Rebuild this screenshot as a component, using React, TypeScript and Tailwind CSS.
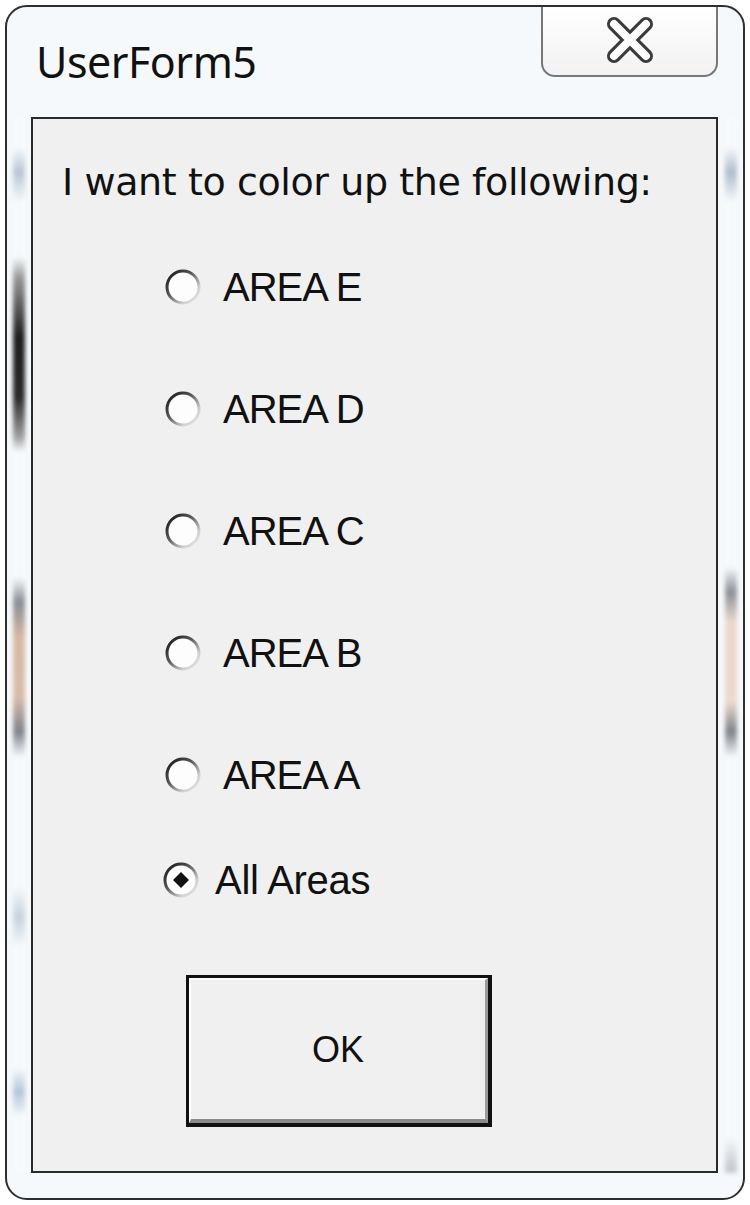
import React from "react";

const areas = ["AREA E", "AREA D", "AREA C", "AREA B", "AREA A"];

const Radio = ({ checked = false }: { checked?: boolean }) => (
  <svg width="40" height="40" viewBox="0 0 40 40" className="shrink-0">
    <defs>
      <linearGradient id="ring" x1="0" y1="0" x2="1" y2="1">
        <stop offset="0" stopColor="#111" />
        <stop offset="0.4" stopColor="#555" />
        <stop offset="0.75" stopColor="#cfcfcf" />
        <stop offset="1" stopColor="#ececec" />
      </linearGradient>
    </defs>
    <circle cx="20" cy="20" r="16" fill="#fdfdfd" stroke="url(#ring)" strokeWidth="3" />
    {checked && <path d="M20 12 L28 20 L20 28 L12 20 Z" fill="#111" />}
  </svg>
);

const CloseGlyph = () => (
  <svg width="60" height="50" viewBox="0 0 60 50">
    <g strokeLinecap="round">
      <path d="M14 9 L46 41 M46 9 L14 41" stroke="#3a3a3a" strokeWidth="14" />
      <path d="M14 9 L46 41 M46 9 L14 41" stroke="#ffffff" strokeWidth="8" />
    </g>
  </svg>
);

export default function App() {
  return (
    <div className="w-[750px] h-[1205px] bg-white p-[5px]">
      <div className="h-full flex flex-col rounded-[22px] border-2 border-[#2e2e2e] bg-[#f6f9fb] overflow-hidden">
        {/* title bar */}
        <div className="h-[110px] flex items-start shrink-0">
          <div
            className="pl-[29px] pt-[32px] text-[43px] leading-[46px] text-[#111] tracking-[-0.5px]"
            style={{ fontFamily: '"Noto Sans", "Open Sans", sans-serif' }}
          >
            UserForm5
          </div>
          <div className="ml-auto mr-[25px] w-[177px] h-[72px] -mt-[2px] rounded-b-[14px] border-2 border-t-0 border-[#777] bg-[linear-gradient(#ffffff,#f2f2f2)] flex items-center justify-center">
            <CloseGlyph />
          </div>
        </div>

        {/* client row */}
        <div className="flex-1 flex">
          <div className="w-[24px] flex justify-center">
            <div className="w-[12px] h-full blur-[2px] bg-[linear-gradient(to_bottom,#f6f9fb_0px,#f6f9fb_30px,#b8c6d4_55px,#f6f9fb_85px,#f6f9fb_140px,#9a9a9a_160px,#1e1e1e_220px,#2a2a2a_280px,#a0a0a0_320px,#f6f9fb_335px,#f6f9fb_460px,#8a8e96_485px,#d6b8a4_520px,#d8bcaa_580px,#80848c_615px,#f6f9fb_640px,#f6f9fb_770px,#c4d2de_800px,#f6f9fb_830px,#f6f9fb_950px,#b4c6d8_975px,#f6f9fb_1000px)]" />
          </div>
          <div className="flex-1 border-2 border-[#2a2a2a] bg-[#f0f0f0] flex flex-col">
            <div
              className="ml-[29px] mt-[43px] h-[40px] text-[38px] leading-[40px] text-[#111] tracking-[-0.4px] whitespace-nowrap"
              style={{ fontFamily: '"DejaVu Sans", Verdana, sans-serif' }}
            >
              I want to color up the following:
            </div>
            <div
              className="mt-[24px] flex flex-col"
              style={{ fontFamily: '"Liberation Sans", Arial, sans-serif' }}
            >
              {areas.map((a) => (
                <div key={a} className="h-[122px] flex items-center pl-[130px] gap-[20px]">
                  <Radio />
                  <span className="text-[40px] tracking-[-1px] text-[#111]">{a}</span>
                </div>
              ))}
              <div className="h-[88px] flex items-center pl-[128px] gap-[14px]">
                <Radio checked />
                <span className="text-[40px] tracking-[-0.3px] text-[#111]">All Areas</span>
              </div>
            </div>
            <div className="ml-[153px] mt-[51px] w-[306px] h-[152px] border-[3px] border-r-4 border-b-4 border-[#111] bg-[#f0f0f0]">
              <div
                className="h-full border-t-2 border-l-2 border-white border-r-[3px] border-b-[4px] border-r-[#9a9a9a] border-b-[#8a8a8a] flex items-center justify-center text-[36px] text-[#111]"
                style={{ fontFamily: '"Liberation Sans", Arial, sans-serif' }}
              >
                OK
              </div>
            </div>
          </div>
          <div className="w-[25px] flex justify-center">
            <div className="w-[12px] h-full blur-[2px] bg-[linear-gradient(to_bottom,#f6f9fb_0px,#f6f9fb_30px,#aebccc_55px,#f6f9fb_85px,#f6f9fb_450px,#8c9098_475px,#ecd8cc_505px,#ecd8cc_585px,#80848c_615px,#f6f9fb_640px,#f6f9fb_1020px,#c8ccd2_1050px)]" />
          </div>
        </div>
        <div className="h-[25px] shrink-0" />
      </div>
    </div>
  );
}
